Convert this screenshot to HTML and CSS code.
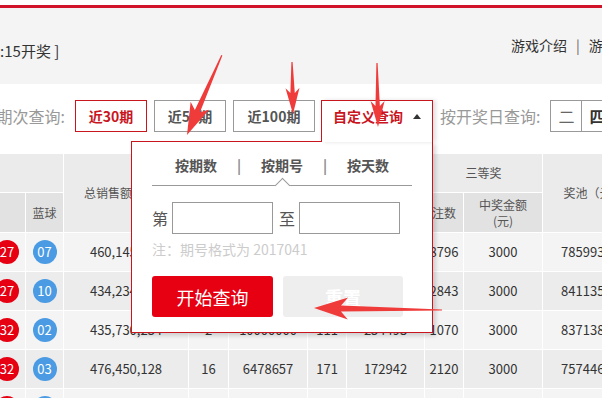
FILE: index.html
```html
<!DOCTYPE html>
<html lang="zh-CN">
<head>
    <meta charset="UTF-8">
    <meta name="viewport" content="width=device-width, initial-scale=1.0">
    <title>双色球开奖结果</title>
    <link rel="stylesheet" href="styles.css">
</head>
<body>
    <div class="topline"></div>

    <!-- 游戏头部 -->
    <div class="game-head">
        <div class="draw-info">[ 第2017041期 开奖时间：每周二、四、日 21:15开奖 ]</div>
        <div class="game-links">
            <a href="#">游戏介绍</a><span class="sep">|</span><a href="#">游戏规则</a>
        </div>
    </div>

    <!-- 查询条件 -->
    <div class="filter">
        <span class="filter-label period-label">期次查询:</span>
        <a class="btn active" href="#">近30期</a>
        <a class="btn" href="#">近50期</a>
        <a class="btn btn-wide" href="#">近100期</a>
        <div class="custom">
            <a class="custom-btn" href="#">自定义查询<span class="caret"></span></a>
            <div class="popup">
                <div class="tabs">
                    <span class="tab">按期数</span>
                    <span class="tab-sep">|</span>
                    <span class="tab current">按期号</span>
                    <span class="tab-sep">|</span>
                    <span class="tab">按天数</span>
                </div>
                <div class="range">
                    <span>第</span>
                    <input type="text">
                    <span>至</span>
                    <input type="text">
                </div>
                <p class="note">注：期号格式为 2017041</p>
                <div class="actions">
                    <button class="go" type="button">开始查询</button>
                    <button class="reset" type="button">重置</button>
                </div>
            </div>
        </div>
        <span class="filter-label day-label">按开奖日查询:</span>
        <div class="days">
            <a href="#">二</a><a class="strong" href="#">四</a><a href="#">日</a>
        </div>
    </div>

    <!-- 开奖结果 -->
    <table class="result">
        <colgroup>
            <col style="width:180px">
            <col style="width:38px">
            <col style="width:125px">
            <col style="width:40px">
            <col style="width:79px">
            <col style="width:39px">
            <col style="width:78px">
            <col style="width:39px">
            <col style="width:79px">
            <col style="width:102px">
        </colgroup>
        <thead>
            <tr>
                <th colspan="2">开奖号码</th>
                <th rowspan="2">总销售额（元）</th>
                <th colspan="2">一等奖</th>
                <th colspan="2">二等奖</th>
                <th colspan="2">三等奖</th>
                <th rowspan="2">奖池（元）</th>
            </tr>
            <tr class="sub">
                <th>红球</th>
                <th>蓝球</th>
                <th>注数</th>
                <th>中奖金额<br>(元)</th>
                <th>注数</th>
                <th>中奖金额<br>(元)</th>
                <th>注数</th>
                <th>中奖金额<br>(元)</th>
            </tr>
        </thead>
        <tbody>
            <tr>
                <td><div class="balls"><span class="ball">03</span><span class="ball">09</span><span class="ball">14</span><span class="ball">21</span><span class="ball">25</span><span class="ball">27</span></div></td>
                <td><span class="ball blue">07</span></td>
                <td>460,145,186</td>
                <td>5</td>
                <td>7592452</td>
                <td>139</td>
                <td>181293</td>
                <td>8796</td>
                <td>3000</td>
                <td>785993157</td>
            </tr>
            <tr>
                <td><div class="balls"><span class="ball">01</span><span class="ball">06</span><span class="ball">11</span><span class="ball">18</span><span class="ball">22</span><span class="ball">27</span></div></td>
                <td><span class="ball blue">10</span></td>
                <td>434,234,570</td>
                <td>9</td>
                <td>6142893</td>
                <td>120</td>
                <td>164537</td>
                <td>2843</td>
                <td>3000</td>
                <td>841135904</td>
            </tr>
            <tr>
                <td><div class="balls"><span class="ball">02</span><span class="ball">08</span><span class="ball">16</span><span class="ball">19</span><span class="ball">30</span><span class="ball">32</span></div></td>
                <td><span class="ball blue">02</span></td>
                <td>435,730,254</td>
                <td>2</td>
                <td>10000000</td>
                <td>111</td>
                <td>254493</td>
                <td>1070</td>
                <td>3000</td>
                <td>837138652</td>
            </tr>
            <tr>
                <td><div class="balls"><span class="ball">04</span><span class="ball">10</span><span class="ball">13</span><span class="ball">24</span><span class="ball">28</span><span class="ball">32</span></div></td>
                <td><span class="ball blue">03</span></td>
                <td>476,450,128</td>
                <td>16</td>
                <td>6478657</td>
                <td>171</td>
                <td>172942</td>
                <td>2120</td>
                <td>3000</td>
                <td>757446209</td>
            </tr>
            <tr>
                <td><div class="balls"><span class="ball">05</span><span class="ball">07</span><span class="ball">12</span><span class="ball">20</span><span class="ball">26</span><span class="ball">31</span></div></td>
                <td><span class="ball blue">12</span></td>
                <td>451,120,336</td>
                <td>7</td>
                <td>8015263</td>
                <td>146</td>
                <td>203118</td>
                <td>1652</td>
                <td>3000</td>
                <td>802318455</td>
            </tr>
        </tbody>
    </table>

    <!-- 标注箭头 -->
    <svg class="marks" width="602" height="398" viewBox="0 0 602 398">
        <g fill="#f03b3b">
            <polygon transform="translate(187 135) rotate(113.6)" points="0,0 -32,-10 -26,-2.8 -87,-0.6 -87,0.6 -26,2.8 -32,10"/>
            <polygon transform="translate(293 114) rotate(88.9)" points="0,0 -26,-7 -21,-2.2 -52,-0.6 -52,0.6 -21,2.2 -26,7"/>
            <polygon transform="translate(378 127) rotate(89.1)" points="0,0 -26,-7 -21,-2.2 -64,-0.6 -64,0.6 -21,2.2 -26,7"/>
            <polygon transform="translate(314 308) rotate(180.9)" points="0,0 -34,-11 -27,-3 -128,-0.6 -128,0.6 -27,3 -34,11"/>
        </g>
    </svg>
</body>
</html>
```

FILE: styles.css
```css
* {
    box-sizing: border-box;
}

body {
    position: relative;
    width: 602px;
    height: 398px;
    margin: 0;
    overflow: hidden;
    font-family: "Noto Sans CJK SC", sans-serif;
    color: #333;
    background-color: #fff;
}

a {
    color: inherit;
    text-decoration: none;
}

.topline {
    height: 3px;
    margin-top: 5px;
    background-color: #d2142b;
}

/* 头部 */
.game-head {
    display: flex;
    align-items: flex-start;
    height: 76px;
    background-color: #f4f4f4;
    white-space: nowrap;
}

.draw-info {
    flex: none;
    width: 357px;
    margin-left: -300px;
    margin-top: 33px;
    font-size: 15px;
    line-height: 20px;
    text-align: right;
}

.game-links {
    flex: none;
    margin-left: 454px;
    margin-top: 27px;
    font-size: 14px;
    line-height: 20px;
}

.game-links .sep {
    margin: 0 9px;
    color: #666;
}

/* 查询条件 */
.filter {
    display: flex;
    align-items: flex-start;
    height: 69px;
    padding-top: 16px;
    white-space: nowrap;
}

.filter-label {
    flex: none;
    font-size: 16px;
    line-height: 32px;
    color: #999;
}

.period-label {
    width: 70px;
    margin-left: -5px;
    margin-right: 10px;
    text-align: right;
}

.btn {
    flex: none;
    width: 72px;
    height: 32px;
    border: 1px solid #999;
    font-size: 14px;
    font-weight: bold;
    line-height: 30px;
    text-align: center;
    color: #555;
    background-color: #fff;
}

.btn + .btn {
    margin-left: 7px;
}

.btn-wide {
    width: 82px;
}

.btn.active {
    border-color: #c9151e;
    color: #c9151e;
}

.custom {
    position: relative;
    z-index: 5;
    flex: none;
    width: 112px;
    margin-left: 6px;
}

.custom-btn {
    position: relative;
    z-index: 3;
    display: flex;
    align-items: flex-start;
    width: 112px;
    height: 42px;
    padding-left: 11px;
    border: 1px solid #c9151e;
    border-bottom: none;
    font-size: 14px;
    font-weight: bold;
    line-height: 30px;
    color: #c9151e;
    background-color: #fff;
    box-shadow: 3px 0 4px rgba(0, 0, 0, 0.12);
}

.caret {
    width: 0;
    height: 0;
    margin: 13px 0 0 10px;
    border-left: 4px solid transparent;
    border-right: 4px solid transparent;
    border-bottom: 5px solid #333;
}

.popup {
    position: absolute;
    top: 41px;
    right: 0;
    z-index: 2;
    width: 302px;
    height: 192px;
    padding: 0 20px;
    border: 1px solid #c9151e;
    background-color: #fff;
    box-shadow: 3px 3px 4px rgba(0, 0, 0, 0.15);
}

.tabs {
    display: flex;
    justify-content: center;
    height: 44px;
    padding-top: 13px;
    border-bottom: 1px solid #999;
}

.tab,
.tab-sep {
    position: relative;
    width: 43px;
    font-size: 14px;
    line-height: 20px;
    text-align: center;
}

.tab {
    font-weight: bold;
    color: #555;
}

.tab-sep {
    font-weight: bold;
    color: #888;
}

.tab.current::after {
    content: "";
    position: absolute;
    top: 25px;
    left: calc(50% - 5px);
    width: 10px;
    height: 10px;
    border-top: 1px solid #999;
    border-left: 1px solid #999;
    background-color: #fff;
    transform: rotate(45deg);
}

.range {
    display: flex;
    align-items: center;
    margin-top: 16px;
    font-size: 16px;
    line-height: 20px;
    color: #555;
}

.range input {
    width: 101px;
    height: 32px;
    margin: 0 6px 0 4px;
    border: 1px solid #999;
    outline: none;
}

.note {
    margin: 5px 0 0;
    font-size: 14px;
    line-height: 20px;
    color: #ccc;
}

.actions {
    display: flex;
    gap: 10px;
    margin-top: 17px;
}

.actions button {
    height: 41px;
    border: none;
    border-radius: 3px;
    font-family: inherit;
    font-size: 18px;
    line-height: 41px;
    color: #fff;
    cursor: pointer;
}

.go {
    width: 121px;
    background-color: #e60012;
}

.reset {
    width: 120px;
    font-weight: bold;
    background-color: #eee;
}

.day-label {
    margin-left: 7px;
    margin-right: 10px;
}

.days {
    display: flex;
    flex: none;
}

.days a {
    width: 32px;
    height: 32px;
    border: 1px solid #999;
    font-size: 16px;
    line-height: 30px;
    text-align: center;
    color: #666;
}

.days a + a {
    margin-left: -1px;
}

.days a.strong {
    font-weight: bold;
    color: #333;
}

/* 开奖表格 */
.result {
    width: 799px;
    margin-left: -155px;
    border-collapse: collapse;
    table-layout: fixed;
    font-size: 13px;
}

.result th,
.result td {
    padding: 0;
    border: 1px solid #fff;
    text-align: center;
    white-space: nowrap;
    overflow: hidden;
}

.result th {
    height: 39px;
    font-size: 12px;
    font-weight: normal;
    line-height: 16px;
    color: #555;
    background-color: #ebebeb;
}

.result .sub th {
    height: 40px;
    background-color: #e2e2e2;
}

.result td {
    height: 39px;
    line-height: 20px;
}

.result tbody tr:nth-child(odd) td {
    background-color: #f4f4f4;
}

.result tbody tr:nth-child(even) td {
    background-color: #ececec;
}

.balls {
    display: flex;
    justify-content: flex-end;
    gap: 6px;
    padding-right: 6px;
}

.ball {
    display: inline-block;
    width: 24px;
    height: 24px;
    border-radius: 50%;
    font-size: 13px;
    line-height: 24px;
    text-align: center;
    color: #fff;
    background-color: #e60012;
    vertical-align: middle;
}

.ball.blue {
    background-color: #4a9be3;
}

.marks {
    position: absolute;
    top: 0;
    left: 0;
    z-index: 10;
    pointer-events: none;
}
```
